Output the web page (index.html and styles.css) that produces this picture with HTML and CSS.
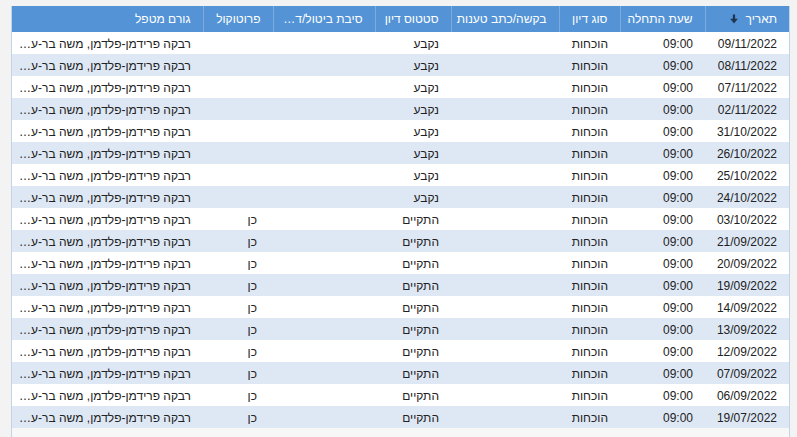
FILE: index.html
```html
<!DOCTYPE html>
<html lang="he" dir="rtl">
<head>
<meta charset="utf-8">
<link rel="stylesheet" href="styles.css">
</head>
<body>
<div class="page">
  <div class="grid">
    <table class="tbl">
      <colgroup>
        <col class="c-date"><col class="c-time"><col class="c-type"><col class="c-req"><col class="c-status"><col class="c-reason"><col class="c-proto"><col class="c-owner">
      </colgroup>
      <thead>
        <tr>
          <th>תאריך <svg class="sort" width="8" height="10" viewBox="0 0 8 10"><path d="M4 0.5V7" stroke="#1d3550" stroke-width="2.2"/><path d="M0.2 4.8L4 9.6L7.8 4.8Z" fill="#1d3550"/></svg></th>
          <th>שעת התחלה</th>
          <th>סוג דיון</th>
          <th>בקשה/כתב טענות</th>
          <th>סטטוס דיון</th>
          <th>סיבת ביטול/ד…</th>
          <th>פרוטוקול</th>
          <th>גורם מטפל</th>
        </tr>
      </thead>
      <tbody>
        <tr><td>09/11/2022</td><td>09:00</td><td>הוכחות</td><td></td><td>נקבע</td><td></td><td class="p"></td><td>רבקה פרידמן-פלדמן, משה בר-ע…</td></tr>
        <tr><td>08/11/2022</td><td>09:00</td><td>הוכחות</td><td></td><td>נקבע</td><td></td><td class="p"></td><td>רבקה פרידמן-פלדמן, משה בר-ע…</td></tr>
        <tr><td>07/11/2022</td><td>09:00</td><td>הוכחות</td><td></td><td>נקבע</td><td></td><td class="p"></td><td>רבקה פרידמן-פלדמן, משה בר-ע…</td></tr>
        <tr><td>02/11/2022</td><td>09:00</td><td>הוכחות</td><td></td><td>נקבע</td><td></td><td class="p"></td><td>רבקה פרידמן-פלדמן, משה בר-ע…</td></tr>
        <tr><td>31/10/2022</td><td>09:00</td><td>הוכחות</td><td></td><td>נקבע</td><td></td><td class="p"></td><td>רבקה פרידמן-פלדמן, משה בר-ע…</td></tr>
        <tr><td>26/10/2022</td><td>09:00</td><td>הוכחות</td><td></td><td>נקבע</td><td></td><td class="p"></td><td>רבקה פרידמן-פלדמן, משה בר-ע…</td></tr>
        <tr><td>25/10/2022</td><td>09:00</td><td>הוכחות</td><td></td><td>נקבע</td><td></td><td class="p"></td><td>רבקה פרידמן-פלדמן, משה בר-ע…</td></tr>
        <tr><td>24/10/2022</td><td>09:00</td><td>הוכחות</td><td></td><td>נקבע</td><td></td><td class="p"></td><td>רבקה פרידמן-פלדמן, משה בר-ע…</td></tr>
        <tr><td>03/10/2022</td><td>09:00</td><td>הוכחות</td><td></td><td>התקיים</td><td></td><td class="p">כן</td><td>רבקה פרידמן-פלדמן, משה בר-ע…</td></tr>
        <tr><td>21/09/2022</td><td>09:00</td><td>הוכחות</td><td></td><td>התקיים</td><td></td><td class="p">כן</td><td>רבקה פרידמן-פלדמן, משה בר-ע…</td></tr>
        <tr><td>20/09/2022</td><td>09:00</td><td>הוכחות</td><td></td><td>התקיים</td><td></td><td class="p">כן</td><td>רבקה פרידמן-פלדמן, משה בר-ע…</td></tr>
        <tr><td>19/09/2022</td><td>09:00</td><td>הוכחות</td><td></td><td>התקיים</td><td></td><td class="p">כן</td><td>רבקה פרידמן-פלדמן, משה בר-ע…</td></tr>
        <tr><td>14/09/2022</td><td>09:00</td><td>הוכחות</td><td></td><td>התקיים</td><td></td><td class="p">כן</td><td>רבקה פרידמן-פלדמן, משה בר-ע…</td></tr>
        <tr><td>13/09/2022</td><td>09:00</td><td>הוכחות</td><td></td><td>התקיים</td><td></td><td class="p">כן</td><td>רבקה פרידמן-פלדמן, משה בר-ע…</td></tr>
        <tr><td>12/09/2022</td><td>09:00</td><td>הוכחות</td><td></td><td>התקיים</td><td></td><td class="p">כן</td><td>רבקה פרידמן-פלדמן, משה בר-ע…</td></tr>
        <tr><td>07/09/2022</td><td>09:00</td><td>הוכחות</td><td></td><td>התקיים</td><td></td><td class="p">כן</td><td>רבקה פרידמן-פלדמן, משה בר-ע…</td></tr>
        <tr><td>06/09/2022</td><td>09:00</td><td>הוכחות</td><td></td><td>התקיים</td><td></td><td class="p">כן</td><td>רבקה פרידמן-פלדמן, משה בר-ע…</td></tr>
        <tr><td>19/07/2022</td><td>09:00</td><td>הוכחות</td><td></td><td>התקיים</td><td></td><td class="p">כן</td><td>רבקה פרידמן-פלדמן, משה בר-ע…</td></tr>
      </tbody>
    </table>
  </div>
</div>
</body>
</html>
```
FILE: styles.css
```css
html, body {
  margin: 0;
  padding: 0;
  background: #f3f3f3;
  font-family: "Liberation Sans", Arial, sans-serif;
  font-size: 12px;
  color: #222;
  overflow: hidden;
}

.page {
  padding: 6px 7px 0 11px;
}

.grid {
  width: 779px;
  height: 440px;
  box-sizing: border-box;
  border-left: 1px solid #c3d3e6;
  border-right: 1px solid #c3d3e6;
  background: #f7f7f7;
}

.tbl {
  width: 100%;
  table-layout: fixed;
  border-collapse: collapse;
  direction: rtl;
}

.c-date { width: 84px; }
.c-time { width: 85px; }
.c-type { width: 61px; }
.c-req { width: 108px; }
.c-status { width: 76px; }
.c-reason { width: 102px; }
.c-proto { width: 70px; }
.c-owner { width: auto; }

.tbl th {
  height: 26px;
  padding: 0 12px 0 8px;
  background: #5393d6;
  color: #fff;
  font-weight: normal;
  text-align: right;
  white-space: nowrap;
  overflow: hidden;
  border-left: 1px solid #7cacdf;
  box-sizing: border-box;
}

.tbl th:last-child {
  border-left: none;
}

.sort {
  vertical-align: -1px;
  margin-right: 4px;
}

.tbl td {
  height: 22px;
  padding: 1px 12px 0 8px;
  text-align: right;
  white-space: nowrap;
  overflow: hidden;
  box-sizing: border-box;
}

.tbl td.p {
  padding-right: 16px;
}

.tbl tbody tr:nth-child(odd) td {
  background: #ffffff;
}

.tbl tbody tr:nth-child(even) td {
  background: #dee8f5;
}
```
